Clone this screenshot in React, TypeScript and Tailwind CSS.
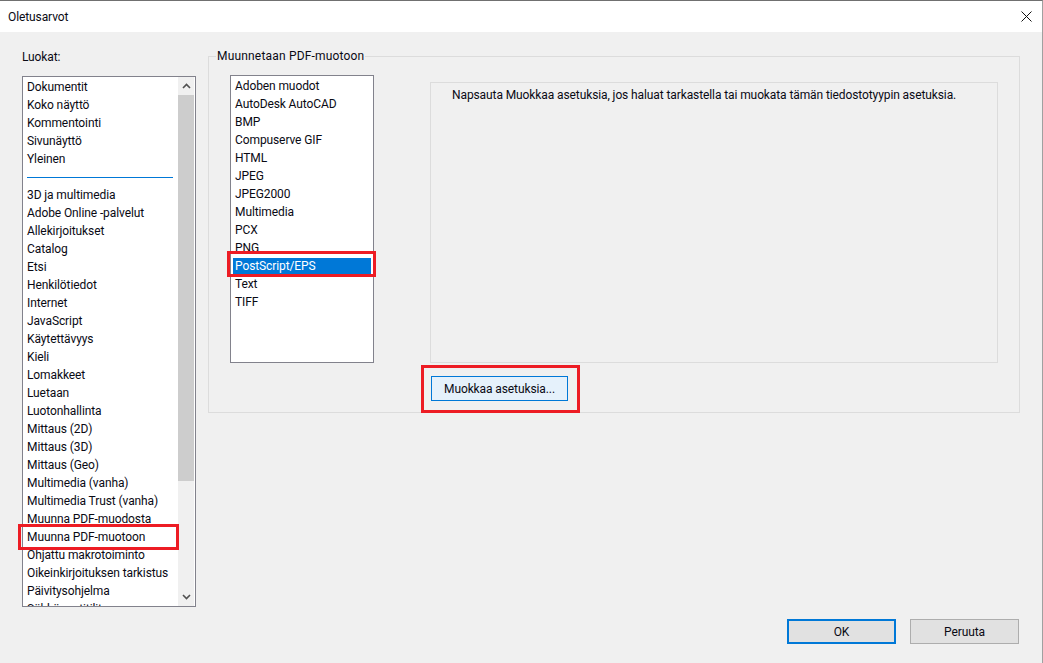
import React from 'react';

const CATEGORIES_TOP = ['Dokumentit', 'Koko näyttö', 'Kommentointi', 'Sivunäyttö', 'Yleinen'];
const CATEGORIES = [
  '3D ja multimedia', 'Adobe Online -palvelut', 'Allekirjoitukset', 'Catalog', 'Etsi', 'Henkilötiedot',
  'Internet', 'JavaScript', 'Käytettävyys', 'Kieli', 'Lomakkeet', 'Luetaan', 'Luotonhallinta',
  'Mittaus (2D)', 'Mittaus (3D)', 'Mittaus (Geo)', 'Multimedia (vanha)', 'Multimedia Trust (vanha)',
  'Muunna PDF-muodosta', 'Muunna PDF-muotoon', 'Ohjattu makrotoiminto', 'Oikeinkirjoituksen tarkistus',
  'Päivitysohjelma', 'Sähköpostitilit',
];
const FORMATS = [
  'Adoben muodot', 'AutoDesk AutoCAD', 'BMP', 'Compuserve GIF', 'HTML', 'JPEG', 'JPEG2000',
  'Multimedia', 'PCX', 'PNG', 'PostScript/EPS', 'Text', 'TIFF',
];

function Row({ label }: { label: string }) {
  return <div className="h-[18px] leading-[18px] whitespace-nowrap">{label}</div>;
}

export default function App() {
  return (
    <div className="w-[1043px] h-[663px] overflow-hidden bg-[#f0f0f0] text-[12px] tracking-[-0.1px] text-[#0a0a14] flex flex-col border-t border-r border-t-[#707070] border-r-[#a0a0a0]" style={{ fontFamily: 'Roboto, "Noto Sans", sans-serif' }}>
      {/* Title */}
      <div className="h-[31px] shrink-0 bg-white flex items-center justify-between pl-2 pr-[10px]">
        <span>Oletusarvot</span>
        <svg width="11" height="11" viewBox="0 0 11 11" fill="none" stroke="#111" strokeWidth="1"><path d="M0.5 0.5l10 10M10.5 0.5l-10 10" /></svg>
      </div>

      <div className="flex-1 flex pl-[22px] pr-[22px]">
        {/* Categories */}
        <div className="w-[174px] shrink-0 pt-[16px]">
          <div className="h-[18px] leading-[18px]">Luokat:</div>
          <div className="relative mt-[10px] h-[531px] border border-[#82828c] bg-white flex">
            <div className="flex-1 pl-[4px] pt-[1px] overflow-hidden">
              {CATEGORIES_TOP.map(c => <Row key={c} label={c} />)}
              <div className="h-[18px] flex items-center pr-[5px]"><div className="w-full h-px bg-[#0078d7]" /></div>
              {CATEGORIES.map(c => <Row key={c} label={c} />)}
            </div>
            <div className="w-[16px] mr-px shrink-0 flex flex-col bg-[#f0f0f0]">
              <div className="h-[18px] flex items-center justify-center">
                <svg width="9" height="6" viewBox="0 0 9 6" fill="none" stroke="#505050" strokeWidth="1.6"><path d="M1 5l3.5-3.5L8 5" /></svg>
              </div>
              <div className="h-[386px] bg-[#cdcdcd]" />
              <div className="flex-1" />
              <div className="h-[18px] flex items-center justify-center">
                <svg width="9" height="6" viewBox="0 0 9 6" fill="none" stroke="#505050" strokeWidth="1.6"><path d="M1 1l3.5 3.5L8 1" /></svg>
              </div>
            </div>
            <div className="absolute left-[-5px] top-[447px] w-[161px] h-[26px] border-[3px] border-[#ed1c24]" />
          </div>
        </div>

        {/* Right side */}
        <div className="flex-1 pl-[12px] flex flex-col">
          <fieldset className="mt-[15px] h-[366px] border border-[#dcdcdc] pl-[21px] pr-[21px] m-0 min-w-0 block">
            <legend className="-ml-[14px] px-[1px] h-[18px] leading-[18px] tracking-[0.18px]">Muunnetaan PDF-muotoon</legend>
            <div className="flex gap-[56px]">
              <div className="relative mt-[10px] w-[144px] h-[288px] shrink-0 border border-[#82828c] bg-white pl-[4px] pt-[1px]">
                {FORMATS.map(f =>
                  f === 'PostScript/EPS' ? (
                    <div key={f} className="-ml-[3px] mr-px h-[18px] leading-[16px] bg-[#0078d7] text-white pl-[2px] border border-white">{f}</div>
                  ) : (
                    <Row key={f} label={f} />
                  )
                )}
                <div className="absolute left-[-4px] top-[175px] w-[149px] h-[26px] border-[3px] border-[#ed1c24]" />
              </div>
              <div className="flex-1 pt-[17px]">
                <div className="h-[281px] border border-[#dcdcdc] pl-[21px] pt-[3px] leading-[18px] whitespace-nowrap">
                  Napsauta Muokkaa asetuksia, jos haluat tarkastella tai muokata tämän tiedostotyypin asetuksia.
                </div>
                <div className="relative mt-[13px] ml-px w-[137px] h-[25px] border border-[#0078d7] bg-[#e5f1fb] flex items-center justify-center">
                  Muokkaa asetuksia...
                  <div className="absolute left-[-11px] top-[-12px] w-[159px] h-[48px] border-[3px] border-[#ed1c24]" />
                </div>
              </div>
            </div>
          </fieldset>
          <div className="mt-[206px] mr-px flex justify-end gap-[14px]">
            <button className="w-[109px] h-[25px] pt-px border-2 border-[#0078d7] bg-[#e1e1e1]">OK</button>
            <button className="w-[109px] h-[25px] pt-px border border-[#adadad] bg-[#e1e1e1]">Peruuta</button>
          </div>
        </div>
      </div>
    </div>
  );
}
